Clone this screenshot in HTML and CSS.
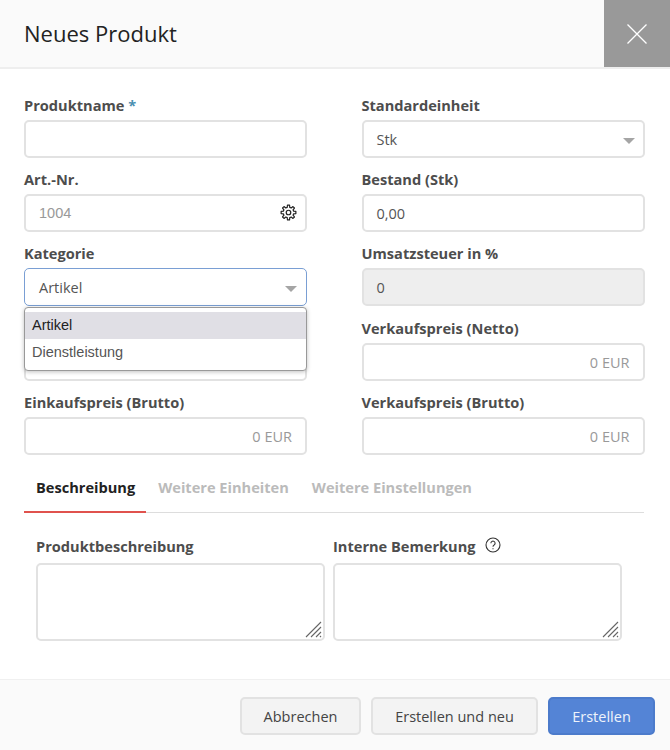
FILE: index.html
```html
<!DOCTYPE html>
<html lang="de">
<head>
<meta charset="utf-8">
<title>Neues Produkt</title>
<link rel="stylesheet" href="styles.css">
</head>
<body>
<div class="modal">
  <header class="head">
    <h1 class="title">Neues Produkt</h1>
    <button class="close" aria-label="Schließen">
      <svg width="20" height="20" viewBox="0 0 20 20"><path d="M.5.5l19 19M19.500.5l-19 19" stroke="#fff" stroke-width="1.300" fill="none"/></svg>
    </button>
  </header>
  <main class="body">
    <div class="grid">
      <div class="field"><label class="label">Produktname <span class="req">*</span></label><div class="input"></div></div>
      <div class="field"><label class="label">Standardeinheit</label><div class="input select">Stk<span class="caret"></span></div></div>
      <div class="field"><label class="label">Art.-Nr.</label>
        <div class="input ph">1004
          <svg class="gear" width="17" height="17" viewBox="-12 -12 24 24" fill="none" stroke="#222" stroke-width="1.700" stroke-linejoin="round"><circle r="3.200"/><polygon points="7.28,-1.81 10.4,-1.46 10.4,1.46 7.28,1.81 6.43,3.87 8.39,6.32 6.32,8.39 3.87,6.43 1.81,7.28 1.46,10.4 -1.46,10.4 -1.81,7.28 -3.87,6.43 -6.32,8.39 -8.39,6.32 -6.43,3.87 -7.28,1.81 -10.4,1.46 -10.4,-1.46 -7.28,-1.81 -6.43,-3.87 -8.39,-6.32 -6.32,-8.39 -3.87,-6.43 -1.81,-7.28 -1.46,-10.4 1.46,-10.4 1.81,-7.28 3.87,-6.43 6.32,-8.39 8.39,-6.32 6.43,-3.87"/></svg>
        </div></div>
      <div class="field"><label class="label">Bestand (Stk)</label><div class="input">0,00</div></div>
      <div class="field kategorie"><label class="label">Kategorie</label>
        <div class="input select focus">Artikel<span class="caret"></span></div>
        <ul class="menu">
          <li class="opt active">Artikel</li>
          <li class="opt">Dienstleistung</li>
        </ul>
      </div>
      <div class="field"><label class="label">Umsatzsteuer in %</label><div class="input disabled">0</div></div>
      <div class="field"><div class="label"></div><div class="input price"></div></div>
      <div class="field"><label class="label">Verkaufspreis (Netto)</label><div class="input price">0 EUR</div></div>
      <div class="field"><label class="label">Einkaufspreis (Brutto)</label><div class="input price">0 EUR</div></div>
      <div class="field"><label class="label">Verkaufspreis (Brutto)</label><div class="input price">0 EUR</div></div>
    </div>
    <nav class="tabs">
      <span class="tab on">Beschreibung</span>
      <span class="tab">Weitere Einheiten</span>
      <span class="tab">Weitere Einstellungen</span>
    </nav>
    <div class="notes">
      <div class="note"><label class="label">Produktbeschreibung</label>
        <div class="area"><svg class="grip" width="17" height="17" viewBox="0 0 17 17" stroke="#666" stroke-width="1.100"><path d="M1 16L16 1M6 16L16 6M11 16l5-5M15 16l1-1"/></svg></div></div>
      <div class="note"><label class="label">Interne Bemerkung
        <svg class="help" width="16" height="16" viewBox="0 0 16 16" fill="none" stroke="#333" stroke-width="1.100"><circle cx="8" cy="8" r="7"/><path d="M5.900 6.200a2.100 2.100 0 1 1 3.200 1.800c-.7.400-1.100.8-1.100 1.700"/><path d="M8 11.200v1.100"/></svg></label>
        <div class="area"><svg class="grip" width="17" height="17" viewBox="0 0 17 17" stroke="#666" stroke-width="1.100"><path d="M1 16L16 1M6 16L16 6M11 16l5-5M15 16l1-1"/></svg></div></div>
    </div>
  </main>
  <footer class="foot">
    <button class="btn cancel">Abbrechen</button>
    <button class="btn again">Erstellen und neu</button>
    <button class="btn primary">Erstellen</button>
  </footer>
</div>
</body>
</html>
```
FILE: styles.css
```css
* { box-sizing: border-box; }
html, body { margin: 0; padding: 0; }
body { width: 670px; height: 750px; background: #fff; font-family: "Open Sans", sans-serif; color: #555; overflow: hidden; }
.modal { display: flex; flex-direction: column; height: 750px; }
.head { height: 69px; flex: none; display: flex; justify-content: space-between; background: #fafafa; border-bottom: 2px solid #eee; padding-left: 24px; }
.title { margin: 0; font-size: 22px; font-weight: 400; line-height: 66px; color: #222; }
.close { width: 66px; height: 67px; border: 0; padding: 0; background: #999; display: flex; align-items: center; justify-content: center; }
.body { flex: 1; padding: 0 26px 0 24px; }
.grid { display: grid; grid-template-columns: 283px 283px; column-gap: 54.500px; padding-top: 25px; }
.field { position: relative; height: 74.200px; }
.label { display: block; height: 26px; font-size: 14.600px; font-weight: 700; line-height: 22px; color: #4d4d4d; white-space: nowrap; }
.req { color: #4a90b0; }
.input { position: relative; height: 38px; border: 2px solid #e2e2e2; border-radius: 5px; background: #fff; padding: 0 13px; font-size: 14.500px; line-height: 35px; color: #555; }
.ph { color: #999; font-family: "Liberation Sans", Arial, sans-serif; }
.gear { position: absolute; right: 8px; top: 8px; }
.select { padding-right: 30px; }
.caret { position: absolute; right: 8px; top: 16px; border-left: 6px solid transparent; border-right: 6px solid transparent; border-top: 6px solid #a5a5a5; }
.focus { border: 1px solid #7a9fd4; padding-left: 14px; line-height: 37px; }
.focus .caret { right: 9px; top: 17px; }
.disabled { background: #eee; }
.price { text-align: right; color: #999; padding-right: 13px; }
.menu { position: absolute; z-index: 2; left: 0; right: 0; top: 65px; height: 64px; margin: 0; padding: 4px 0 0; list-style: none; background: #fff; border: 1px solid #999; border-radius: 4px; box-shadow: 0 1px 4px rgba(0, 0, 0, .25); font-family: "Liberation Sans", Arial, sans-serif; font-size: 14.500px; color: #555; }
.opt { height: 26.500px; line-height: 26.500px; padding-left: 7px; }
.opt.active { background: #e0dfe5; color: #222; }
.tabs { display: flex; gap: 23px; height: 46px; margin-top: 2px; border-bottom: 1px solid #ddd; padding-left: 12px; }
.tab { position: relative; font-size: 14.600px; font-weight: 700; line-height: 41px; color: #bbb; white-space: nowrap; }
.tab.on { color: #222; }
.tab.on::after { content: ""; position: absolute; left: -12px; right: -11px; bottom: -1px; height: 2px; background: #e0524d; }
.tab { height: 45px; }
.notes { display: grid; grid-template-columns: 289px 289px; column-gap: 8px; padding: 21px 0 0 12px; }
.note { min-width: 0; }
.note .label { height: 29px; line-height: 25px; }
.help { margin-left: 6px; vertical-align: -1px; }
.area { position: relative; height: 78px; border: 2px solid #e2e2e2; border-radius: 5px; background: #fff; }
.grip { position: absolute; right: 1px; bottom: 1px; }
.foot { flex: none; height: 71px; background: #fafafa; border-top: 1px solid #f0f0f0; display: flex; justify-content: flex-end; gap: 10px; padding: 17px 15px 0 0; }
.btn { height: 38px; border-radius: 5px; border: 2px solid #e2e2e2; background: #f3f3f3; font-family: "Open Sans", sans-serif; font-size: 14.500px; color: #444; padding: 0; }
.cancel { width: 121px; }
.again { width: 167px; }
.primary { width: 107px; background: #5484d6; border-color: #4c7bcb; color: #eef3fb; }
```
